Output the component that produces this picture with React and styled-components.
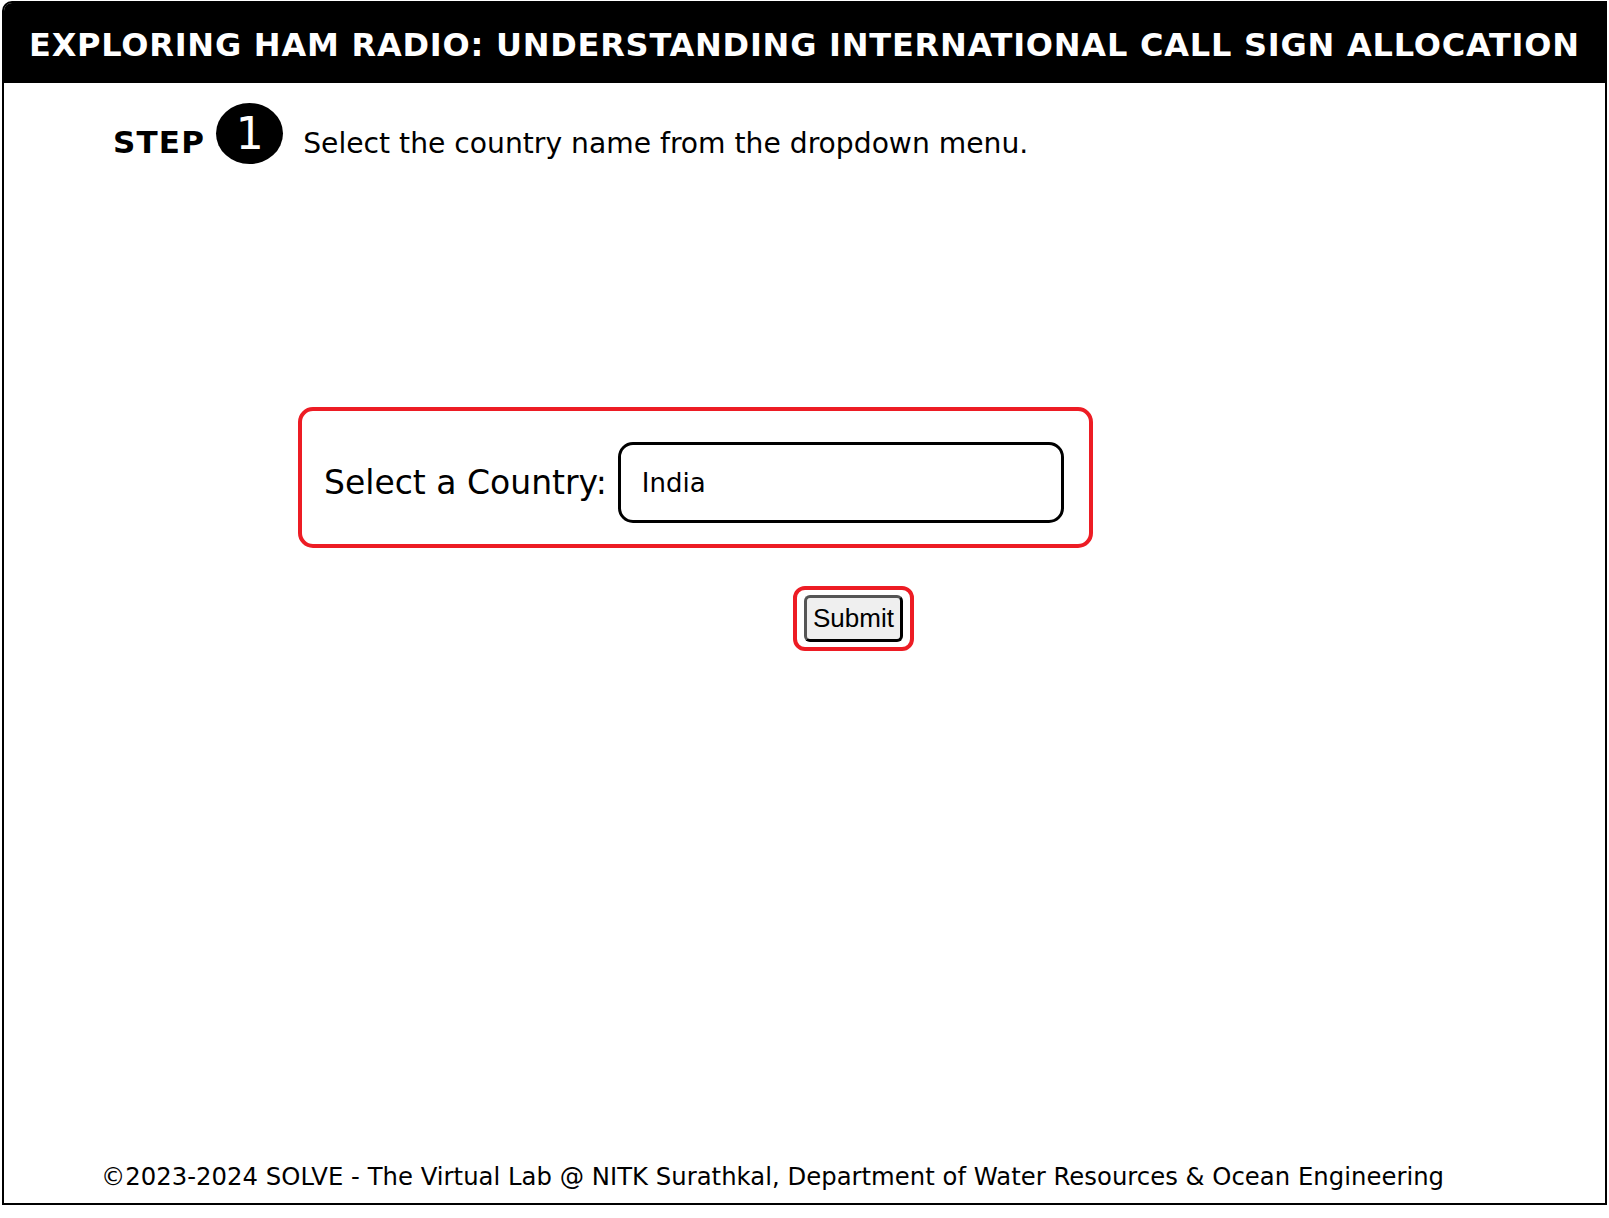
import React from "react";
import styled, { createGlobalStyle } from "styled-components";

const Global = createGlobalStyle`
  html, body { margin: 0; padding: 0; background: #fff; }
  body { padding: 1px 0 0 2px; font-family: "DejaVu Sans", Verdana, sans-serif; color: #000; }
  * { box-sizing: border-box; }
`;

const Frame = styled.div`
  width: 1605px;
  height: 1204px;
  border: 2px solid #000;
  border-top-left-radius: 10px;
  display: flex;
  flex-direction: column;
  overflow: hidden;
`;

const Header = styled.header`
  height: 80px;
  background: #000;
  color: #fff;
  display: flex;
  align-items: center;
  padding-left: 25px;
  flex-shrink: 0;
`;

const Title = styled.h1`
  margin: 0;
  font-size: 32px;
  font-weight: bold;
  letter-spacing: 0.77px;
  white-space: nowrap;
  line-height: 1;
  padding-top: 3px;
`;

const Main = styled.main`
  flex: 1;
  display: flex;
  flex-direction: column;
`;

const StepRow = styled.div`
  display: flex;
  align-items: center;
  padding: 20px 0 0 109px;
`;

const StepLabel = styled.span`
  font-size: 31px;
  font-weight: bold;
  letter-spacing: 1.2px;
  margin-right: 11px;
  padding-top: 16px;
`;

const StepBadge = styled.span`
  width: 67px;
  height: 61px;
  border-radius: 50%;
  background: #000;
  color: #fff;
  font-size: 44px;
  display: flex;
  align-items: center;
  justify-content: center;
  line-height: 1;
  margin-right: 20px;
`;

const Instruction = styled.span`
  font-size: 28.2px;
  padding-top: 20px;
`;

const FormBox = styled.div`
  margin: 243px 0 0 294px;
  width: 795px;
  height: 141px;
  border: 4px solid #ed1c24;
  border-radius: 15px;
  display: flex;
  align-items: center;
  padding: 10px 0 0 22px;
`;

const FieldLabel = styled.label`
  font-size: 33px;
  margin-right: 11px;
`;

const CountryInput = styled.div`
  width: 446px;
  height: 81px;
  border: 3px solid #000;
  border-radius: 15px;
  display: flex;
  align-items: center;
  padding-left: 21px;
  font-size: 26px;
`;

const SubmitWrap = styled.div`
  margin: 38px 0 0 789px;
  width: 121px;
  height: 65px;
  border: 4px solid #ed1c24;
  border-radius: 12px;
  display: flex;
  align-items: center;
  justify-content: center;
`;

const SubmitButton = styled.button`
  width: 99px;
  height: 47px;
  border: 3px solid #000;
  border-top-color: #555;
  border-left-color: #555;
  border-radius: 6px;
  background: #efefef;
  font-family: "Liberation Sans", Arial, sans-serif;
  font-size: 26px;
  padding: 0;
  color: #000;
`;

const Footer = styled.footer`
  margin-top: auto;
  padding: 0 0 12px 97px;
  font-size: 24.3px;
  letter-spacing: 0.03px;
  white-space: nowrap;
`;

export default function App() {
  return (
    <>
      <Global />
      <Frame>
        <Header>
          <Title>EXPLORING HAM RADIO: UNDERSTANDING INTERNATIONAL CALL SIGN ALLOCATION</Title>
        </Header>
        <Main>
          <StepRow>
            <StepLabel>STEP</StepLabel>
            <StepBadge>1</StepBadge>
            <Instruction>Select the country name from the dropdown menu.</Instruction>
          </StepRow>
          <FormBox>
            <FieldLabel>Select a Country:</FieldLabel>
            <CountryInput>India</CountryInput>
          </FormBox>
          <SubmitWrap>
            <SubmitButton>Submit</SubmitButton>
          </SubmitWrap>
          <Footer>©2023-2024 SOLVE - The Virtual Lab @ NITK Surathkal, Department of Water Resources &amp; Ocean Engineering</Footer>
        </Main>
      </Frame>
    </>
  );
}
